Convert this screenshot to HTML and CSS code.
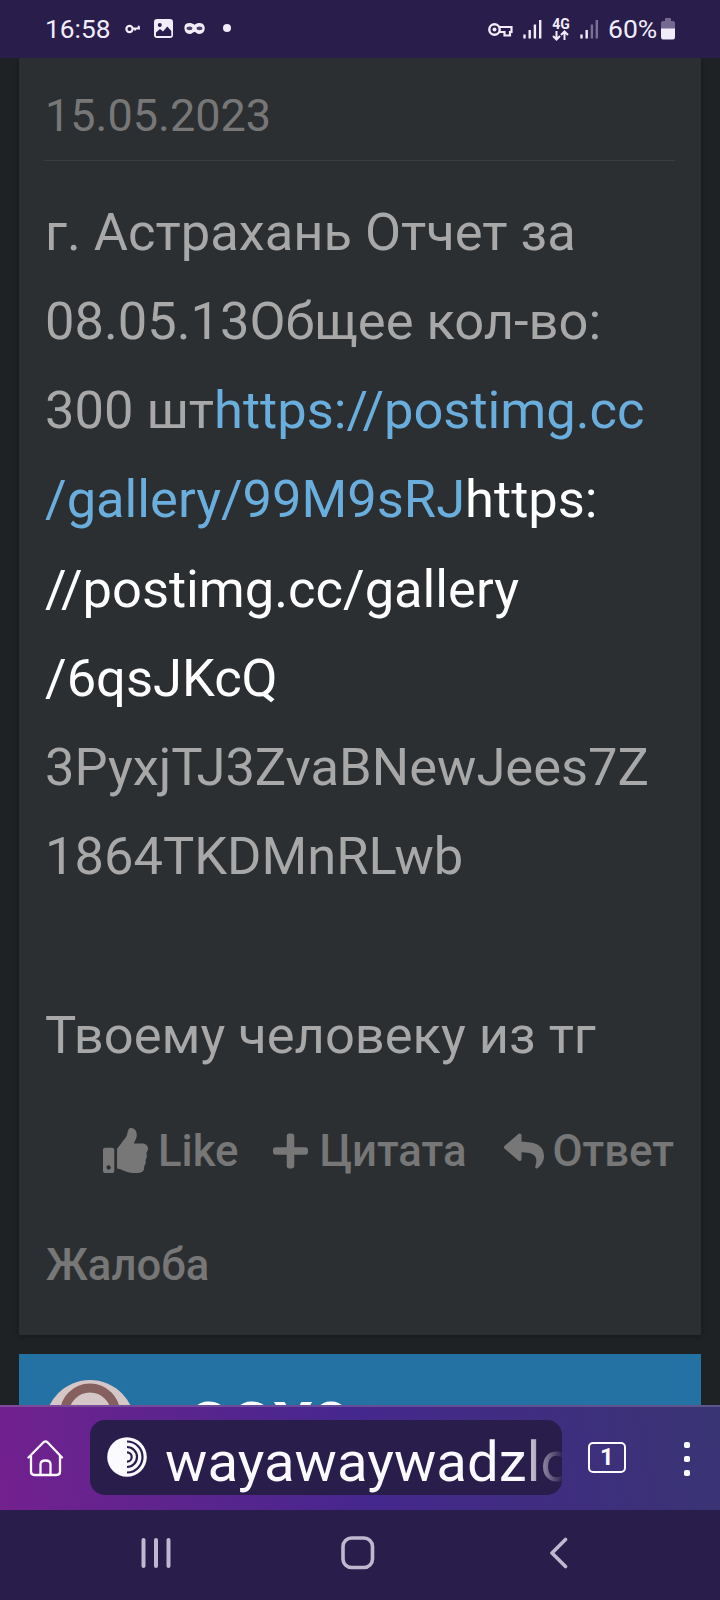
FILE: index.html
```html
<!DOCTYPE html>
<html lang="ru">
<head>
<meta charset="utf-8">
<title>15.05.2023</title>
<link rel="stylesheet" href="styles.css">
</head>
<body>
<div class="screen">
  <header class="status">
    <span class="clock">16:58</span>
    <svg class="notif" width="116" height="26" viewBox="0 0 116 26" fill="none">
      <circle cx="8.500" cy="13" r="3.100" stroke="#f0ecf8" stroke-width="2.200"/>
      <path d="M11.500 12.500H19M17.700 12.500V9.800M14 12.500V14.500" stroke="#f0ecf8" stroke-width="2"/>
      <rect x="33" y="3" width="19" height="19" rx="3" fill="#f0ecf8"/>
      <circle cx="38.800" cy="9" r="2" fill="#291d4c"/>
      <path d="M35 16.500L39 13L42 15.500L46.300 10.500L50.300 15V20H35.500L39.300 16L42 18.500L46.500 13L50 17.500V20H35Z" fill="#291d4c"/>
      <path d="M73.500 8.800C70 6 64 6.500 63.500 10.500C63 15 65 18 69 18C71 18 72 16 73.500 16S76 18 78 18C82 18 84.500 15 83.500 10.500C82.500 6.500 77 6 73.500 8.800Z" fill="#f0ecf8"/>
      <ellipse cx="68.500" cy="12.300" rx="2.900" ry="1.900" fill="#4b4070"/><ellipse cx="78.500" cy="12.300" rx="2.900" ry="1.900" fill="#4b4070"/>
      <circle cx="106" cy="12" r="4" fill="#f0ecf8"/>
    </svg>
    <div class="status-right">
      <svg width="110" height="26" viewBox="0 0 110 26" fill="none">
        <circle cx="6.500" cy="13.500" r="5.200" stroke="#f0ecf8" stroke-width="2.400"/>
        <circle cx="6.500" cy="13.500" r="2" fill="#f0ecf8"/>
        <path d="M11 11H23.500V16H22V19.500H16.500V16H11" stroke="#f0ecf8" stroke-width="2.200"/>
        <path d="M36.500 18.500V22.500M41.700 14V22.500M46.900 8.500V22.500M52.200 4V22.500" stroke="#f0ecf8" stroke-width="2.400"/>
        <path d="M68.500 15V23.500M65 20L68.500 23.500L72 20M76.500 24V16M73 19L76.500 15.500L80 19" stroke="#f0ecf8" stroke-width="2"/>
        <path d="M93.500 18.500V22.500M98.700 14V22.500" stroke="#f0ecf8" stroke-width="2.400"/>
        <path d="M103.900 8.500V22.500M108.800 4V22.500" stroke="#7a6f96" stroke-width="2.400"/>
        <text x="64.300" y="12.500" class="net">4G</text>
      </svg>
      <span class="percent">60%</span>
      <svg width="14" height="22" viewBox="0 0 14 22">
        <path d="M2 3H4V1Q4 0 5 0H9Q10 0 10 1V3H12Q14 3 14 5V11H0V5Q0 3 2 3Z" fill="#75698f"/>
        <path d="M0 10.500H14V19Q14 21.500 12 21.500H2Q0 21.500 0 19Z" fill="#f0ecf8"/>
      </svg>
    </div>
  </header>

  <main class="page">
    <article class="post">
      <time class="date">15.05.2023</time>
      <div class="body">г. Астрахань Отчет за<br>08.05.13Общее кол-во:<br>300 шт<a class="link">https://postimg.cc<br>/gallery/99M9sRJ</a><a class="plain">https:<br>//postimg.cc/gallery<br>/6qsJKcQ</a><br>3PyxjTJ3ZvaBNewJees7Z<br>1864TKDMnRLwb<br><br>Твоему человеку из тг</div>
      <div class="actions">
        <span class="action like"><svg width="45" height="45" viewBox="0 0 512 512" fill="currentColor"><path d="M104 224H24c-13.255 0-24 10.745-24 24v240c0 13.255 10.745 24 24 24h80c13.255 0 24-10.745 24-24V248c0-13.255-10.745-24-24-24zM64 472c-13.255 0-24-10.745-24-24s10.745-24 24-24 24 10.745 24 24-10.745 24-24 24zM384 81.452c0 42.416-25.970 66.208-33.277 94.548h101.723c33.397 0 59.397 27.746 59.553 58.098.084 17.938-7.546 37.249-19.439 49.197l-.11.11c9.836 23.337 8.237 56.037-9.308 79.469 8.681 25.895-.069 57.704-16.382 74.757 4.298 17.598 2.244 32.575-6.148 44.632C440.202 511.587 389.616 512 346.839 512l-2.845-.001c-48.287-.017-87.806-17.598-119.560-31.725-15.957-7.099-36.821-15.887-52.651-16.178-6.540-.12-11.783-5.457-11.783-11.998v-213.770c0-3.200 1.282-6.271 3.558-8.521 39.614-39.144 56.648-80.587 89.117-113.111 14.804-14.832 20.188-37.236 25.393-58.902C282.515 39.293 291.817 0 312 0c24 0 72 8 72 81.452z"/></svg><span class="label">Like</span></span>
        <span class="action quote"><svg width="35" height="40" viewBox="0 0 448 512" fill="currentColor"><path d="M416 208H272V64c0-17.670-14.330-32-32-32h-32c-17.670 0-32 14.330-32 32v144H32c-17.670 0-32 14.330-32 32v32c0 17.670 14.330 32 32 32h144v144c0 17.670 14.330 32 32 32h32c17.670 0 32-14.330 32-32V304h144c17.670 0 32-14.330 32-32v-32c0-17.670-14.330-32-32-32z"/></svg><span class="label">Цитата</span></span>
        <span class="action reply"><svg width="40" height="40" viewBox="0 0 512 512" fill="currentColor"><path d="M8.309 189.836L184.313 37.851C199.719 24.546 224 35.347 224 56.015v80.053c160.629 1.839 288 34.032 288 186.258 0 61.441-39.581 122.309-83.333 154.132-13.653 9.931-33.111-2.533-28.077-18.631 45.344-145.012-21.507-183.510-176.590-185.742V360c0 20.700-24.300 31.453-39.687 18.164l-176.004-152c-11.071-9.562-11.086-26.753 0-36.328z"/></svg><span class="label">Ответ</span></span>
      </div>
      <div class="report">Жалоба</div>
    </article>

    <article class="next">
      <svg class="avatar" width="90" height="90" viewBox="0 0 90 90">
        <circle cx="45" cy="45" r="45" fill="#d5c6c7"/>
        <circle cx="45" cy="33.500" r="25.500" fill="none" stroke="#86605f" stroke-width="9"/>
      </svg>
      <span class="nick">GGX8</span>
    </article>
  </main>

  <div class="toolbar">
    <svg class="home" width="38" height="38" viewBox="0 0 38 38" fill="none" stroke="#fbfafe" stroke-width="2.300" stroke-linecap="round" stroke-linejoin="round">
      <path d="M2.500 18.500L17.500 3.300Q19.500 1.500 21.500 3.300L36 18.500M5 17V32.500Q5 36 8.500 36H30.500Q34 36 34 32.500V17"/>
      <path d="M14.500 35.500V25.500Q14.500 21.500 19.500 21.500T24.500 25.500V35.500"/>
    </svg>
    <div class="address">
      <svg class="onion" width="40" height="40" viewBox="0 0 40 40">
        <circle cx="20" cy="20" r="19.800" fill="#fbfafe"/>
        <path d="M20 4.500A15.500 15.500 0 0 1 20 35.500M20 10A10 10 0 0 1 20 30M20 15.300A4.700 4.700 0 0 1 20 24.700" fill="none" stroke="#291d4c" stroke-width="2.200"/>
      </svg>
      <span class="url">wayawaywadzlo</span>
    </div>
    <span class="tabs">1</span>
    <svg class="menu" width="6" height="36" viewBox="0 0 6 36" fill="#fbfafe">
      <rect y="1" width="6" height="6" rx="1.800"/><rect y="15" width="6" height="6" rx="1.800"/><rect y="29" width="6" height="6" rx="1.800"/>
    </svg>
  </div>

  <nav class="navbar">
    <svg width="30" height="32" viewBox="0 0 30 32" stroke="#bfb8cf" stroke-width="4" stroke-linecap="round"><path d="M2.500 3V29M15 3V29M27.500 3V29"/></svg>
    <svg class="nav-home" width="34" height="34" viewBox="0 0 34 34" fill="none" stroke="#bfb8cf" stroke-width="3.600"><rect x="2" y="2" width="29.500" height="29.500" rx="8.500"/></svg>
    <svg width="20" height="32" viewBox="0 0 20 32" fill="none" stroke="#bfb8cf" stroke-width="3.600" stroke-linecap="round" stroke-linejoin="round"><path d="M16.500 2.500L3 16L16.500 29.500"/></svg>
  </nav>
</div>
</body>
</html>
```

FILE: styles.css
```css
* { box-sizing: border-box; }

body {
  margin: 0;
  background: #1e2225;
  font-family: Roboto, "Noto Sans", sans-serif;
}

svg { display: block; flex: none; }

.screen {
  width: 720px;
  height: 1600px;
  display: flex;
  flex-direction: column;
  overflow: hidden;
}

.status {
  flex: none;
  height: 58px;
  padding: 0 45px;
  display: flex;
  align-items: center;
  background: #291d4c;
  color: #f0ecf8;
}

.clock {
  width: 65px;
  font-size: 26.300px;
  white-space: nowrap;
}

.notif { margin-left: 11px; }

.status-right {
  margin-left: auto;
  display: flex;
  align-items: center;
}

.net {
  font: 700 14px Roboto, sans-serif;
  fill: #f0ecf8;
}

.percent {
  width: 50px;
  margin: 0 3px 0 10px;
  padding-bottom: 2px;
  font-size: 26.500px;
  white-space: nowrap;
}

.page {
  flex: none;
  height: 1347px;
  padding: 0 19px;
  overflow: hidden;
}

.post {
  height: 1277px;
  margin-bottom: 19px;
  padding: 0 26px;
  background: #2c2f32;
  box-shadow: 0 1px 5px rgba(0, 0, 0, .3);
}

.date {
  display: block;
  height: 103px;
  margin-left: -1px;
  padding: 31px 0 0 1px;
  border-bottom: 1px solid #3a3d41;
  font-size: 45px;
  line-height: 53px;
  color: #777;
}

.body {
  padding-top: 26.750px;
  font-size: 52.450px;
  line-height: 89.200px;
  color: #a8a8a8;
  white-space: nowrap;
}

.link { color: #6aaede; }
.plain { color: #fff; }

.actions,
.report {
  height: 114px;
  display: flex;
  align-items: center;
  font-size: 43.700px;
  font-weight: 500;
  line-height: 53px;
  color: #777;
}

.actions {
  margin-top: 14px;
  padding-right: 1px;
  justify-content: flex-end;
}

.report { padding: 2px 0 0 1px; }

.action {
  display: flex;
  align-items: center;
}

.label { padding-top: 2px; }

.like { gap: 10px; }
.quote { gap: 11px; margin-left: 35px; }
.reply { gap: 8px; margin-left: 38px; }

.next {
  height: 150px;
  padding: 26px 26px;
  display: flex;
  align-items: flex-start;
  background: #2471a3;
}

.nick {
  margin: 8px 0 0 52px;
  font-size: 63px;
  font-weight: 700;
  line-height: 75px;
  color: #fff;
}

.toolbar {
  flex: none;
  height: 105px;
  padding: 0 30px 0 26px;
  display: flex;
  align-items: center;
  border-top: 2px solid rgba(140, 125, 170, .45);
  background: linear-gradient(80deg, #73218f 0%, #45278d 50%, #393473 100%) border-box;
}

.home { margin-top: -2px; }

.address {
  width: 472px;
  height: 75px;
  margin: 0 0 3px 26px;
  padding-left: 17px;
  display: flex;
  align-items: center;
  overflow: hidden;
  border-radius: 15px;
  background: #291d4c;
}

.url {
  flex: 1;
  margin-left: 18px;
  padding-top: 10px;
  overflow: hidden;
  font-size: 56.400px;
  line-height: 75px;
  white-space: nowrap;
  color: transparent;
  background: linear-gradient(to right, #fbfafe 355px, #291d4c 399px);
  background-clip: text;
  -webkit-background-clip: text;
}

.tabs {
  width: 38px;
  height: 31px;
  margin: 0 0 3px 26px;
  border: 2.500px solid #fbfafe;
  border-radius: 5px;
  color: #fbfafe;
  font-size: 24px;
  font-weight: 700;
  line-height: 26px;
  text-align: center;
}

.menu { margin-left: auto; }

.navbar {
  flex: none;
  height: 90px;
  padding: 0 151px 4px 141px;
  display: flex;
  align-items: center;
  justify-content: space-between;
  background: #291d4c;
}

.nav-home { margin-right: 4px; }
```
